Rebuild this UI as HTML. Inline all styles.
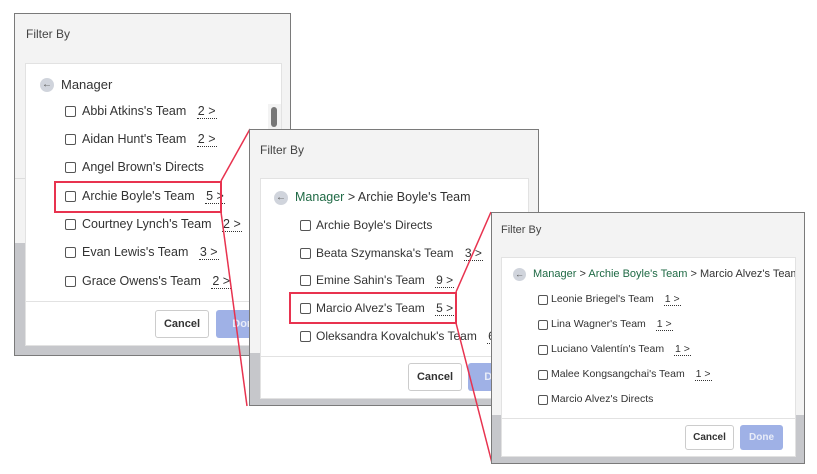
<!DOCTYPE html>
<html><head><meta charset="utf-8"><style>
*{box-sizing:border-box;margin:0;padding:0}
body{width:817px;height:474px;background:#fff;position:relative;overflow:hidden;font-family:"Liberation Sans",sans-serif;color:#333}
.p{position:absolute;border:1px solid #7a7a7a;background:#f3f3f3;overflow:hidden}
.gray{position:absolute;left:0;right:0;bottom:0;background:#c6c7cb}
.title{position:absolute;font-size:12px;color:#444}
.in{position:absolute;background:#fff;border:1px solid #e2e2e2;overflow:hidden}
.a{position:absolute;white-space:nowrap}
.cb{position:absolute;width:11px;height:11px;border:1px solid #555;border-radius:2px;background:#fff}
.n{border-bottom:1px dotted #333;margin-left:7px;padding:0 1px}
.back{position:absolute;width:14px;height:14px;border-radius:50%;background:#d0d4dc;color:#555;font-size:10px;line-height:14px;text-align:center}
.sep{position:absolute;left:0;right:0;height:1px;background:#e2e2e2}
.btn{position:absolute;border:1px solid #ccc;border-radius:3px;background:#fff;font-size:11px;font-weight:bold;color:#333;text-align:center}
.done{position:absolute;border-radius:3px;background:#9fb1e6;font-size:11px;font-weight:bold;color:#e8ecf8;text-align:center}
.g{color:#1f6a45}
svg{position:absolute;left:0;top:0}
.red{position:absolute;border:2px solid #e8334f}
</style></head><body>

<!-- Panel 1 -->
<div class="p" style="left:14px;top:13px;width:277px;height:343px">
 <div class="gray" style="top:229px"></div>
 <div style="position:absolute;left:0;top:164px;width:12px;height:1px;background:#ddd"></div>
 <div class="title" style="left:11px;top:13px">Filter By</div>
 <div class="in" style="left:10px;top:49px;width:257px;height:283px">
  <div class="back" style="left:14px;top:14px">&#8592;</div>
  <div class="a" style="left:35px;top:13px;font-size:13px">Manager</div>
  <div style="position:absolute;left:242px;top:40px;width:13px;height:200px;background:#f3f3f3"></div>
  <div style="position:absolute;left:245px;top:43px;width:6px;height:20px;border-radius:3px;background:#777"></div>
  <div style="font-size:12.5px">
   <div class="cb" style="left:39px;top:42px"></div><div class="a" style="left:56px;top:40px">Abbi Atkins's Team <span class="n">2 &gt;</span></div>
   <div class="cb" style="left:39px;top:70px"></div><div class="a" style="left:56px;top:68px">Aidan Hunt's Team <span class="n">2 &gt;</span></div>
   <div class="cb" style="left:39px;top:98px"></div><div class="a" style="left:56px;top:96px">Angel Brown's Directs</div>
   <div class="cb" style="left:39px;top:127px"></div><div class="a" style="left:56px;top:125px">Archie Boyle's Team <span class="n">5 &gt;</span></div>
   <div class="cb" style="left:39px;top:155px"></div><div class="a" style="left:56px;top:153px">Courtney Lynch's Team <span class="n">2 &gt;</span></div>
   <div class="cb" style="left:39px;top:183px"></div><div class="a" style="left:56px;top:181px">Evan Lewis's Team <span class="n">3 &gt;</span></div>
   <div class="cb" style="left:39px;top:212px"></div><div class="a" style="left:56px;top:210px">Grace Owens's Team <span class="n">2 &gt;</span></div>
  </div>
  <div class="sep" style="top:237px"></div>
  <div class="btn" style="left:129px;top:246px;width:54px;height:28px;line-height:26px">Cancel</div>
  <div class="done" style="left:190px;top:246px;width:60px;height:28px;line-height:28px">Done</div>
 </div>
</div>
<div class="red" style="left:54px;top:181px;width:168px;height:32px"></div>
<svg width="817" height="474"><line x1="221" y1="181" x2="250" y2="129" stroke="#e8334f" stroke-width="1.5"/><line x1="221" y1="212" x2="247" y2="406" stroke="#e8334f" stroke-width="1.5"/></svg>

<!-- Panel 2 -->
<div class="p" style="left:249px;top:129px;width:290px;height:277px">
 <div class="gray" style="top:223px"></div>
 <div class="title" style="left:10px;top:13px">Filter By</div>
 <div class="in" style="left:10px;top:48px;width:269px;height:221px">
  <div class="back" style="left:13px;top:12px">&#8592;</div>
  <div class="a" style="left:34px;top:11px;font-size:12.5px"><span class="g">Manager</span> &gt; Archie Boyle's Team</div>
  <div style="font-size:12px">
   <div class="cb" style="left:39px;top:41px"></div><div class="a" style="left:55px;top:39px">Archie Boyle's Directs</div>
   <div class="cb" style="left:39px;top:69px"></div><div class="a" style="left:55px;top:67px">Beata Szymanska's Team <span class="n">3 &gt;</span></div>
   <div class="cb" style="left:39px;top:96px"></div><div class="a" style="left:55px;top:94px">Emine Sahin's Team <span class="n">9 &gt;</span></div>
   <div class="cb" style="left:39px;top:124px"></div><div class="a" style="left:55px;top:122px">Marcio Alvez's Team <span class="n">5 &gt;</span></div>
   <div class="cb" style="left:39px;top:152px"></div><div class="a" style="left:55px;top:150px">Oleksandra Kovalchuk's Team <span class="n">6 &gt;</span></div>
  </div>
  <div class="sep" style="top:177px"></div>
  <div class="btn" style="left:147px;top:184px;width:54px;height:28px;line-height:26px">Cancel</div>
  <div class="done" style="left:207px;top:184px;width:60px;height:28px;line-height:28px">Done</div>
 </div>
</div>
<div class="red" style="left:289px;top:292px;width:168px;height:32px"></div>
<svg width="817" height="474"><line x1="456" y1="292" x2="491" y2="212" stroke="#e8334f" stroke-width="1.5"/><line x1="456" y1="323" x2="492" y2="463" stroke="#e8334f" stroke-width="1.5"/></svg>

<!-- Panel 3 -->
<div class="p" style="left:491px;top:212px;width:314px;height:252px">
 <div class="gray" style="top:202px"></div>
 <div class="title" style="left:9px;top:11px;font-size:11px">Filter By</div>
 <div class="in" style="left:9px;top:44px;width:295px;height:200px">
  <div class="back" style="left:11px;top:10px;width:13px;height:13px;line-height:13px;font-size:9px">&#8592;</div>
  <div class="a" style="left:31px;top:10px;font-size:11px"><span class="g">Manager</span> &gt; <span class="g">Archie Boyle's Team</span> &gt; Marcio Alvez's Team</div>
  <div style="font-size:10.5px">
   <div class="cb" style="left:36px;top:37px;width:10px;height:10px"></div><div class="a" style="left:49px;top:35px">Leonie Briegel's Team <span class="n">1 &gt;</span></div>
   <div class="cb" style="left:36px;top:62px;width:10px;height:10px"></div><div class="a" style="left:49px;top:60px">Lina Wagner's Team <span class="n">1 &gt;</span></div>
   <div class="cb" style="left:36px;top:87px;width:10px;height:10px"></div><div class="a" style="left:49px;top:85px">Luciano Valentín's Team <span class="n">1 &gt;</span></div>
   <div class="cb" style="left:36px;top:112px;width:10px;height:10px"></div><div class="a" style="left:49px;top:110px">Malee Kongsangchai's Team <span class="n">1 &gt;</span></div>
   <div class="cb" style="left:36px;top:137px;width:10px;height:10px"></div><div class="a" style="left:49px;top:135px">Marcio Alvez's Directs</div>
  </div>
  <div class="sep" style="top:160px"></div>
  <div class="btn" style="left:183px;top:167px;width:49px;height:25px;line-height:23px;font-size:10px">Cancel</div>
  <div class="done" style="left:238px;top:167px;width:43px;height:25px;line-height:25px;font-size:10px">Done</div>
 </div>
</div>
</body></html>
